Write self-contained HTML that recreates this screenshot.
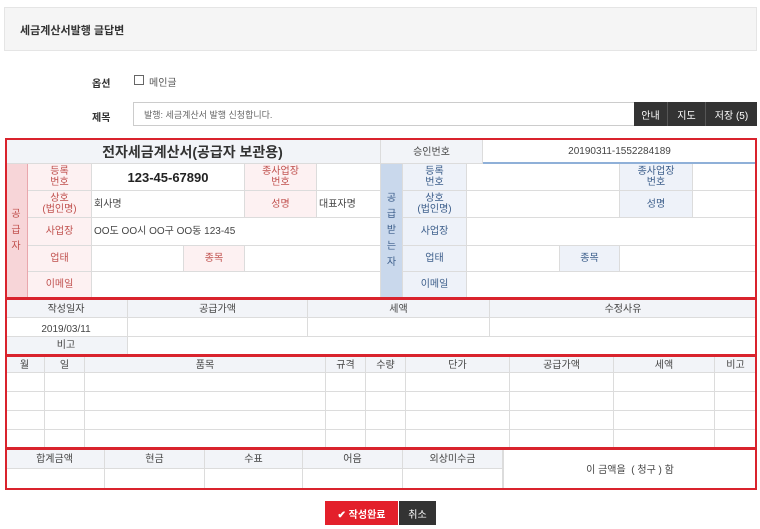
<!DOCTYPE html><html><head><meta charset="utf-8"><style>
body{margin:0;width:760px;height:529px;background:#fff;font-family:"Liberation Sans","Noto Sans CJK KR",sans-serif;position:relative;overflow:hidden;color:#333}
div{position:absolute;box-sizing:border-box}
.c{border-right:1px solid #dcdcdc;border-bottom:1px solid #dcdcdc;display:flex;align-items:center;justify-content:center;text-align:center;font-size:10px;line-height:11px;color:#444}
.g{background:#f2f4f8}
.pl{background:#fdf1f2;color:#c0504d}
.bl{background:#eef2f9;color:#3b5d8a}
.l{justify-content:flex-start;padding-left:2px}
.rb{border:2px solid #d9232d}
.t{padding-top:3px}
.btn{background:#333;color:#fff;font-size:10px;display:flex;align-items:center;justify-content:center}
</style></head><body>
<div style="left:4px;top:7px;width:753px;height:44px;background:#f5f5f5;border:1px solid #e5e5e5"></div>
<div style="left:20px;top:22px;font-size:11px;font-weight:bold;color:#333">세금계산서발행 글답변</div>
<div style="left:92px;top:75px;font-size:10px;font-weight:bold">옵션</div>
<div style="left:134px;top:75px;width:10px;height:10px;border:1px solid #666"></div>
<div style="left:149px;top:74px;font-size:10px;color:#555">메인글</div>
<div style="left:92px;top:109px;font-size:10px;font-weight:bold">제목</div>
<div style="left:133px;top:102px;width:502px;height:24px;border:1px solid #ccc;font-size:9px;color:#666;padding:5px 0 0 10px">발행: 세금계산서 발행 신청합니다.</div>
<div class="btn" style="left:634px;top:102px;width:33px;height:24px">안내</div>
<div class="btn" style="left:667px;top:102px;width:38px;height:24px;border-left:1px solid #555">지도</div>
<div class="btn" style="left:705px;top:102px;width:52px;height:24px;border-left:1px solid #555">저장 (5)</div>

<!-- box1 -->
<div class="c g t" style="left:5px;top:138px;width:376px;height:26px;font-size:14px;font-weight:bold;color:#333">전자세금계산서(공급자 보관용)</div>
<div class="c g t" style="left:381px;top:138px;width:102px;height:26px">승인번호</div>
<div class="c t" style="left:483px;top:138px;width:274px;height:26px;border-bottom:2px solid #8fb0d8">20190311-1552284189</div>
<div class="c" style="left:5px;top:164px;width:23px;height:134px;background:#f7d5d8;color:#c0504d;line-height:16px;border-right:1px solid #e9a7ad">공<br>급<br>자</div>
<div class="c pl" style="left:28px;top:164px;width:64px;height:27px">등록<br>번호</div>
<div class="c" style="left:92px;top:164px;width:153px;height:27px;font-size:13px;font-weight:bold;color:#222">123-45-67890</div>
<div class="c pl" style="left:245px;top:164px;width:72px;height:27px">종사업장<br>번호</div>
<div class="c" style="left:317px;top:164px;width:64px;height:27px"></div>
<div class="c pl" style="left:28px;top:191px;width:64px;height:27px">상호<br>(법인명)</div>
<div class="c l" style="left:92px;top:191px;width:153px;height:27px">회사명</div>
<div class="c pl" style="left:245px;top:191px;width:72px;height:27px">성명</div>
<div class="c l" style="left:317px;top:191px;width:64px;height:27px">대표자명</div>
<div class="c pl" style="left:28px;top:218px;width:64px;height:28px">사업장</div>
<div class="c l" style="left:92px;top:218px;width:289px;height:28px">OO도 OO시 OO구 OO동 123-45</div>
<div class="c pl" style="left:28px;top:246px;width:64px;height:26px">업태</div>
<div class="c" style="left:92px;top:246px;width:92px;height:26px"></div>
<div class="c pl" style="left:184px;top:246px;width:61px;height:26px">종목</div>
<div class="c" style="left:245px;top:246px;width:136px;height:26px"></div>
<div class="c pl" style="left:28px;top:272px;width:64px;height:26px">이메일</div>
<div class="c" style="left:92px;top:272px;width:289px;height:26px"></div>
<div class="c" style="left:381px;top:164px;width:22px;height:134px;background:#c9d8ec;color:#3b5d8a;line-height:16px">공<br>급<br>받<br>는<br>자</div>
<div class="c bl" style="left:403px;top:164px;width:64px;height:27px">등록<br>번호</div>
<div class="c" style="left:467px;top:164px;width:153px;height:27px"></div>
<div class="c bl" style="left:620px;top:164px;width:73px;height:27px">종사업장<br>번호</div>
<div class="c" style="left:693px;top:164px;width:64px;height:27px"></div>
<div class="c bl" style="left:403px;top:191px;width:64px;height:27px">상호<br>(법인명)</div>
<div class="c" style="left:467px;top:191px;width:153px;height:27px"></div>
<div class="c bl" style="left:620px;top:191px;width:73px;height:27px">성명</div>
<div class="c" style="left:693px;top:191px;width:64px;height:27px"></div>
<div class="c bl" style="left:403px;top:218px;width:64px;height:28px">사업장</div>
<div class="c" style="left:467px;top:218px;width:290px;height:28px"></div>
<div class="c bl" style="left:403px;top:246px;width:64px;height:26px">업태</div>
<div class="c" style="left:467px;top:246px;width:93px;height:26px"></div>
<div class="c bl" style="left:560px;top:246px;width:60px;height:26px">종목</div>
<div class="c" style="left:620px;top:246px;width:137px;height:26px"></div>
<div class="c bl" style="left:403px;top:272px;width:64px;height:26px">이메일</div>
<div class="rb" style="left:5px;top:138px;width:752px;height:161px"></div>

<!-- box2 -->
<div class="c g t" style="left:5px;top:298px;width:123px;height:20px">작성일자</div>
<div class="c g t" style="left:128px;top:298px;width:180px;height:20px">공급가액</div>
<div class="c g t" style="left:308px;top:298px;width:182px;height:20px">세액</div>
<div class="c g t" style="left:490px;top:298px;width:267px;height:20px">수정사유</div>
<div class="c" style="left:5px;top:318px;width:123px;height:19px;padding-top:4px">2019/03/11</div>
<div class="c" style="left:128px;top:318px;width:180px;height:19px"></div>
<div class="c" style="left:308px;top:318px;width:182px;height:19px"></div>
<div class="c" style="left:490px;top:318px;width:267px;height:19px"></div>
<div class="c g" style="left:5px;top:337px;width:123px;height:18px">비고</div>
<div class="rb" style="left:5px;top:298px;width:752px;height:58px"></div>

<!-- box3 -->
<div id="b3"></div>
<div class="rb" style="left:5px;top:355px;width:752px;height:94px"></div>

<!-- box4 -->
<div class="c g t" style="left:5px;top:448px;width:100px;height:21px">합계금액</div>
<div class="c g t" style="left:105px;top:448px;width:100px;height:21px">현금</div>
<div class="c g t" style="left:205px;top:448px;width:98px;height:21px">수표</div>
<div class="c g t" style="left:303px;top:448px;width:100px;height:21px">어음</div>
<div class="c g t" style="left:403px;top:448px;width:100px;height:21px">외상미수금</div>
<div class="c" style="left:503px;top:448px;width:254px;height:42px;border-left:1px solid #dcdcdc;padding-top:4px">이 금액을 &nbsp;( 청구 ) 함</div>
<div class="c" style="left:5px;top:469px;width:100px;height:21px"></div>
<div class="c" style="left:105px;top:469px;width:100px;height:21px"></div>
<div class="c" style="left:205px;top:469px;width:98px;height:21px"></div>
<div class="c" style="left:303px;top:469px;width:100px;height:21px"></div>
<div class="c" style="left:403px;top:469px;width:100px;height:21px"></div>
<div class="rb" style="left:5px;top:448px;width:752px;height:42px"></div>

<div class="btn" style="left:325px;top:501px;width:73px;height:24px;background:#e3202b;font-weight:bold">✔ 작성완료</div>
<div class="btn" style="left:399px;top:501px;width:37px;height:24px">취소</div>

<script>
var xs=[5,45,85,326,366,406,510,614,715,757],h=["월","일","품목","규격","수량","단가","공급가액","세액","비고"],s="";
for(var r=0;r<5;r++){var t=r==0?355:373+(r-1)*19,hh=r==0?18:19;
for(var i=0;i<9;i++)s+='<div class="c'+(r==0?' g t':'')+'" style="left:'+xs[i]+'px;top:'+t+'px;width:'+(xs[i+1]-xs[i])+'px;height:'+hh+'px">'+(r==0?h[i]:'')+'</div>';}
document.getElementById('b3').outerHTML=s;
</script>
</body></html>
